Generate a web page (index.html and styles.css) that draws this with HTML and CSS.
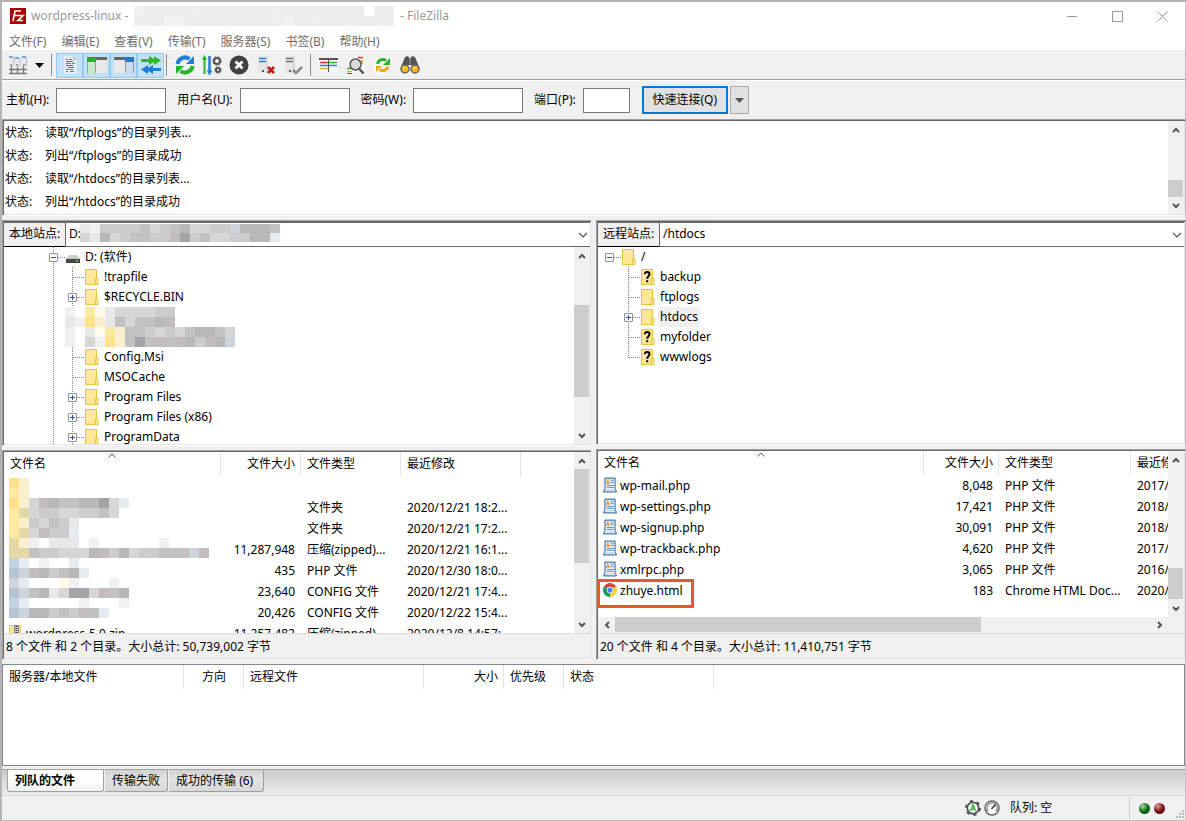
FILE: index.html
```html
<!DOCTYPE html>
<html lang="zh-CN">
<head>
    <meta charset="UTF-8">
    <title>wordpress-linux - FileZilla</title>
    <link rel="stylesheet" href="styles.css">
</head>
<body>
<svg class="sprite" aria-hidden="true">
    <symbol id="up" viewBox="0 0 8 6"><path d="M1 5 4 2 7 5" fill="none" stroke="#555" stroke-width="2"/></symbol>
    <symbol id="down" viewBox="0 0 8 6"><path d="M1 1 4 4 7 1" fill="none" stroke="#555" stroke-width="2"/></symbol>
    <symbol id="left" viewBox="0 0 6 8"><path d="M5 1 2 4 5 7" fill="none" stroke="#555" stroke-width="2"/></symbol>
    <symbol id="right" viewBox="0 0 6 8"><path d="M1 1 4 4 1 7" fill="none" stroke="#555" stroke-width="2"/></symbol>
    <symbol id="chevron" viewBox="0 0 10 6"><path d="M1 1 5 5 9 1" fill="none" stroke="#555" stroke-width="1.2"/></symbol>
    <symbol id="sort" viewBox="0 0 8 5"><path d="M.5 4.5 4 1 7.5 4.5" fill="none" stroke="#666"/></symbol>
    <symbol id="caret" viewBox="0 0 9 5"><path d="M0 0h9L4.500 5z" fill="currentColor"/></symbol>
    <symbol id="folder" viewBox="0 0 14 16">
        <path d="M.5.500h11v9h1.500v6H.5z" fill="#ffe797" stroke="#e8c341"/>
        <path d="M10.500 15V9.500H13" fill="none" stroke="#e8c341"/>
    </symbol>
    <symbol id="unknown" viewBox="0 0 14 16">
        <use href="#folder"/>
        <path d="M3.800 5.200C3.800 2.400 8.500 2.400 8.500 5.300 8.500 7.300 6.200 7.200 6.200 9.800" fill="none" stroke="#000" stroke-width="2"/>
        <path d="M5.200 11.200h2v2h-2z"/>
    </symbol>
    <symbol id="php" viewBox="0 0 15 16">
        <path d="M2 .5h11v11l1.500 4H.5l1.500-4z" fill="#9cc0de" stroke="#3a6ea5"/>
        <path d="M3 2h9v10.500H3z" fill="#f2f8fd"/>
        <path d="m3.500 7 1.700-4 1.700 4M4 5.800h2.400" fill="none" stroke="#f08a24" stroke-width="1.200"/>
        <path d="M8 3.500h3.500M8 5.500h3.500M4 8.500h7.500M4 10.500h7.500" stroke="#4a82b8"/>
        <path d="M2 13.500h11" stroke="#fff"/>
    </symbol>
    <symbol id="zip" viewBox="0 0 14 16">
        <use href="#folder"/>
        <path d="M5.500.5h4v12h-4z" fill="#d8d8d8" stroke="#888"/>
        <path d="M7.500 1v10" stroke="#333" stroke-width="2" stroke-dasharray="1 1"/>
    </symbol>
    <symbol id="chrome" viewBox="0 0 14 14">
        <path d="M7 7 .94 3.500A7 7 0 0 1 13.060 3.500z" fill="#db4437"/>
        <path d="M7 7 13.060 3.500A7 7 0 0 1 7 14z" fill="#ffcd40"/>
        <path d="M7 7 7 14A7 7 0 0 1 .94 3.500z" fill="#0f9d58"/>
        <path d="M7 3.800h6.200l-.2-.5H7z" fill="#db4437"/>
        <circle cx="7" cy="7" r="3.300" fill="#fff"/><circle cx="7" cy="7" r="2.600" fill="#4285f4"/>
    </symbol>
</svg>

<div class="window">
    <header class="title-bar">
        <svg class="app-icon" viewBox="0 0 16 16">
            <path d="M0 0h16v16H0z" fill="#b00000"/>
            <path d="M.5.500h15v15H.5z" fill="none" stroke="#8a0000" stroke-dasharray="1 1"/>
            <path d="M3 13 5 3h6M4.200 7.500h4.500M8 7.500h5L8 12.500h5" fill="none" stroke="#fff" stroke-width="1.700"/>
        </svg>
        <span class="title-name">wordpress-linux -</span>
        <svg class="mosaic" data-mosaic="title"></svg>
        <span class="title-app">- FileZilla</span>
        <div class="window-buttons">
            <button aria-label="最小化"><svg width="11" height="11"><path d="M0 5.500h10" stroke="#999"/></svg></button>
            <button aria-label="最大化"><svg width="11" height="11"><path d="M.5.500h10v10H.5z" fill="none" stroke="#999"/></svg></button>
            <button aria-label="关闭"><svg width="11" height="11"><path d="m.5.500 10 10m0-10-10 10" stroke="#999"/></svg></button>
        </div>
    </header>

    <nav class="menu-bar">
        <button>文件(F)</button>
        <button>编辑(E)</button>
        <button>查看(V)</button>
        <button>传输(T)</button>
        <button>服务器(S)</button>
        <button>书签(B)</button>
        <button>帮助(H)</button>
    </nav>

    <div class="toolbar">
        <button class="tool" aria-label="站点管理器">
            <svg viewBox="0 0 20 20">
                <path d="M1 1h5v10H1zM7 2h5v10H7zM13 1h5v10h-5z" fill="#e8eaec"/>
                <path d="M1 2h4M7 3h4M14 2h4" stroke="#4a9be0" stroke-width="1.500"/>
                <path d="M6 2v9M12 3v9M18.500 2v9" stroke="#bbb"/>
                <path d="M3.500 11v3M9.500 12v6M15.500 11v3M1 14.500h18M1 18.500h18M3.500 13v5M15.500 13v5" fill="none" stroke="#777" stroke-width="1.300"/>
                <path d="M2 10h2M8 10h2M15 10h2" stroke="#555"/>
            </svg>
        </button>
        <button class="tool-menu" aria-label="打开站点"><svg width="9" height="5"><use href="#caret"/></svg></button>
        <span class="tool-separator"></span>
        <button class="tool pressed" aria-label="消息日志">
            <svg viewBox="0 0 20 20">
                <path d="M4 1h9l4 4v14H4z" fill="#e6ebf0"/><path d="M13 1v4h4z" fill="#bcc4cc"/>
                <path d="M6 4.500h2M6 8.500h5M8 12.500h6M6 16.500h2M10 16.500h4" stroke="#4a80b4"/>
                <path d="M9 4.500h3M12 8.500h3M9 14.500h4" stroke="#37a837"/>
                <path d="M6 6.500h7M6 10.500h7M6 14.500h2" stroke="#5b6f82"/>
            </svg>
        </button>
        <button class="tool pressed" aria-label="本地目录树">
            <svg viewBox="0 0 20 20">
                <path d="M0 2h20v16H0z" fill="#e9e9e9"/><path d="M0 2h20v3H0z" fill="#666"/>
                <path d="M0 3h9v4H0z" fill="#25b825"/><path d="M0 7h8v11H0z" fill="#c8e8cc"/>
                <path d="M8.500 7v11M.5 7v11" stroke="#999"/>
            </svg>
        </button>
        <button class="tool pressed" aria-label="远程目录树">
            <svg viewBox="0 0 20 20">
                <path d="M0 2h20v16H0z" fill="#e9e9e9"/><path d="M0 2h20v3H0z" fill="#666"/>
                <path d="M11 3h9v4h-9z" fill="#1d7bd4"/><path d="M12 7h8v11h-8z" fill="#c4dcf2"/>
                <path d="M11.500 7v11M19.500 7v11" stroke="#999"/>
            </svg>
        </button>
        <button class="tool pressed" aria-label="传输队列">
            <svg viewBox="0 0 20 20">
                <path d="M0 4h8V1l5 3V1l7 4.500-7 4.500V7l-5 3V7H0z" fill="#29b929"/>
                <path d="M20 13h-8v-3l-5 3v-3l-7 4.500 7 4.500v-3l5 3v-3h8z" fill="#1f7fd6"/>
            </svg>
        </button>
        <span class="tool-separator after-pressed"></span>
        <button class="tool" aria-label="刷新">
            <svg viewBox="0 0 20 20">
                <path d="M2.500 9a7.500 7.500 0 0 1 12-5" fill="none" stroke="#1f7fd6" stroke-width="4"/>
                <path d="M19 1v8h-8z" fill="#1f7fd6"/>
                <path d="M17.500 11a7.500 7.500 0 0 1-12 5" fill="none" stroke="#27b427" stroke-width="4"/>
                <path d="M1 19v-8h8z" fill="#27b427"/>
            </svg>
        </button>
        <button class="tool" aria-label="处理队列">
            <svg viewBox="0 0 20 20">
                <path d="M2.500 19V4M1 5l1.500-3L4 5" fill="#27b427" stroke="#27b427" stroke-width="2"/>
                <path d="M7.500 1v15M6 15l1.500 3L9 15" fill="#1f7fd6" stroke="#1f7fd6" stroke-width="2.500"/>
                <circle cx="15" cy="6" r="3" fill="none" stroke="#555" stroke-width="2"/>
                <circle cx="15" cy="6" r="4.300" fill="none" stroke="#555" stroke-dasharray="1.700 1.700"/>
                <circle cx="16" cy="15" r="2" fill="none" stroke="#555" stroke-width="2"/>
                <circle cx="16" cy="15" r="3.300" fill="none" stroke="#555" stroke-dasharray="1.300 1.300"/>
            </svg>
        </button>
        <button class="tool" aria-label="取消">
            <svg viewBox="0 0 20 20">
                <circle cx="10" cy="10" r="9.500" fill="#414141"/>
                <path d="m6.500 6.500 7 7m0-7-7 7" stroke="#fff" stroke-width="2.800"/>
            </svg>
        </button>
        <button class="tool" aria-label="断开连接">
            <svg viewBox="0 0 20 20">
                <path d="M2 1h9v17H2z" fill="#e6e6e6"/><path d="M11 1v17" stroke="#c4c4c4"/>
                <path d="M3 3.500h7M3 6.500h7" stroke="#2b83d6" stroke-width="1.500"/><path d="M6 15h2v2H6z" fill="#555"/>
                <path d="m12 12 6 6m0-6-6 6" stroke="#c01616" stroke-width="2.500"/>
            </svg>
        </button>
        <button class="tool" aria-label="重新连接">
            <svg viewBox="0 0 20 20">
                <path d="M2 1h9v17H2z" fill="#e6e6e6"/><path d="M11 1v17" stroke="#c4c4c4"/>
                <path d="M3 3.500h7M3 6.500h7" stroke="#777" stroke-width="1.500"/><path d="M6 15h2v2H6z" fill="#555"/>
                <path d="m10 15 3 3 6-6" fill="none" stroke="#888" stroke-width="2.500"/>
            </svg>
        </button>
        <span class="tool-separator"></span>
        <button class="tool" aria-label="目录比较">
            <svg viewBox="0 0 20 20">
                <path d="M1 3h18v14H1z" fill="#fafafa"/><path d="M0 3h19v2H0z" fill="#555"/>
                <path d="M1 7.500h8" stroke="#d33" stroke-width="1.500"/><path d="M1 10.500h17" stroke="#2b83d6" stroke-width="1.500"/>
                <path d="M1 13.500h8" stroke="#e8b21a" stroke-width="1.500"/><path d="M10 7.500h8" stroke="#27b427" stroke-width="1.500"/>
                <path d="M9.500 3v14" stroke="#555"/>
            </svg>
        </button>
        <button class="tool" aria-label="文件名过滤">
            <svg viewBox="0 0 20 20">
                <path d="M9 1h9v13H9zM1 7h8v12H1z" fill="#fafafa"/>
                <path d="M12 2.500h5" stroke="#d33" stroke-width="1.500"/><path d="M1 13.500h4" stroke="#27b427" stroke-width="1.500"/>
                <path d="M1 16.500h5" stroke="#e8b21a" stroke-width="1.500"/><path d="M1 18.500h5" stroke="#d33"/>
                <path d="M16 5v4" stroke="#e8b21a" stroke-width="2"/>
                <circle cx="9.500" cy="9.500" r="5.500" fill="#d9d9d9" stroke="#555" stroke-width="1.500"/>
                <path d="m13.500 14 4 4.500" stroke="#555" stroke-width="2.500"/>
            </svg>
        </button>
        <button class="tool" aria-label="同步浏览">
            <svg viewBox="0 0 20 20">
                <path d="M9 1h10v13H9zM1 7h10v12H1z" fill="#fafafa"/>
                <path d="M4.500 9a5.500 5.500 0 0 1 8.500-3.500" fill="none" stroke="#27b427" stroke-width="3"/><path d="M17 3v7h-7z" fill="#27b427"/>
                <path d="M15 11.500a5.500 5.500 0 0 1-8.500 3" fill="none" stroke="#f0a818" stroke-width="3"/><path d="M3 17v-6h6z" fill="#f0a818"/>
            </svg>
        </button>
        <button class="tool" aria-label="搜索文件">
            <svg viewBox="0 0 20 20">
                <path d="m5 2 3-1 2 3 2-3 3 1 4.500 11-5 4-3-7h-3l-3 7-5-4z" fill="#555"/>
                <path d="M10 4v5" stroke="#999"/>
                <circle cx="5" cy="14" r="4" fill="#f8b414" stroke="#666" stroke-width="1.500"/>
                <circle cx="15" cy="14" r="4" fill="#f8b414" stroke="#666" stroke-width="1.500"/>
                <path d="M3.500 13h2M13.500 13h2" stroke="#ffe28a" stroke-width="1.500"/>
            </svg>
        </button>
    </div>

    <form class="quick-connect">
        <label for="host">主机(H):</label>
        <input id="host" type="text">
        <label for="user">用户名(U):</label>
        <input id="user" type="text">
        <label for="pass">密码(W):</label>
        <input id="pass" type="password">
        <label for="port">端口(P):</label>
        <input id="port" class="port" type="text">
        <button type="button" class="connect">快速连接(Q)</button>
        <button type="button" class="history" aria-label="历史记录"><svg width="9" height="5"><use href="#caret"/></svg></button>
    </form>

    <section class="pane log">
        <ul class="log-lines">
            <li><span class="log-kind">状态:</span>读取“/ftplogs”的目录列表...</li>
            <li><span class="log-kind">状态:</span>列出“/ftplogs”的目录成功</li>
            <li><span class="log-kind">状态:</span>读取“/htdocs”的目录列表...</li>
            <li><span class="log-kind">状态:</span>列出“/htdocs”的目录成功</li>
        </ul>
        <div class="scrollbar log-scroll">
            <svg class="up"><use href="#up"/></svg><span class="thumb"></span><svg class="down"><use href="#down"/></svg>
        </div>
    </section>

    <main class="sites">
        <div class="site">
            <section class="pane site-tree">
                <div class="address">
                    <label for="local-path">本地站点:</label>
                    <div class="path">
                        <select id="local-path"><option>D:</option></select>
                        <svg class="mosaic path-mosaic" data-mosaic="path"></svg>
                        <svg class="path-chevron"><use href="#chevron"/></svg>
                    </div>
                </div>
                <div class="scroll-area">
                    <ul class="tree local-tree">
                        <li><i class="node line"><b class="box minus"></b></i>
                            <svg class="item-icon" viewBox="0 0 14 16"><path d="m3 6h8l3 4H0z" fill="#c9cccf"/><path d="M0 10h14v4H0z" fill="#444"/><path d="M10 12h2" stroke="#5ee05e" stroke-width="1.500"/></svg>
                            <span>D: (软件)</span></li>
                        <li><i class="guide line"></i><i class="node line"></i><svg class="item-icon"><use href="#folder"/></svg><span>!trapfile</span></li>
                        <li><i class="guide line"></i><i class="node line"><b class="box plus"></b></i><svg class="item-icon"><use href="#folder"/></svg><span>$RECYCLE.BIN</span></li>
                        <li class="masked"><i class="guide line"></i><svg class="mosaic" data-mosaic="tree"></svg></li>
                        <li><i class="guide line"></i><i class="node line"></i><svg class="item-icon"><use href="#folder"/></svg><span>Config.Msi</span></li>
                        <li><i class="guide line"></i><i class="node line"></i><svg class="item-icon"><use href="#folder"/></svg><span>MSOCache</span></li>
                        <li><i class="guide line"></i><i class="node line"><b class="box plus"></b></i><svg class="item-icon"><use href="#folder"/></svg><span>Program Files</span></li>
                        <li><i class="guide line"></i><i class="node line"><b class="box plus"></b></i><svg class="item-icon"><use href="#folder"/></svg><span>Program Files (x86)</span></li>
                        <li><i class="guide line"></i><i class="node line"><b class="box plus"></b></i><svg class="item-icon"><use href="#folder"/></svg><span>ProgramData</span></li>
                    </ul>
                    <div class="scrollbar tree-scroll">
                        <svg class="up"><use href="#up"/></svg><span class="thumb"></span><svg class="down"><use href="#down"/></svg>
                    </div>
                </div>
            </section>

            <section class="pane file-list local-list">
                <div class="scroll-area">
                    <div class="table-view">
                        <table>
                            <colgroup><col class="col-name"><col class="col-size"><col class="col-type"><col class="col-date"><col></colgroup>
                            <thead>
                                <tr><th>文件名</th><th class="number">文件大小</th><th>文件类型</th><th>最近修改</th><th class="rest"></th></tr>
                            </thead>
                            <tbody>
                                <tr><td></td><td></td><td></td><td></td></tr>
                                <tr><td></td><td></td><td>文件夹</td><td>2020/12/21 18:2...</td></tr>
                                <tr><td></td><td></td><td>文件夹</td><td>2020/12/21 17:2...</td></tr>
                                <tr><td></td><td class="number">11,287,948</td><td>压缩(zipped)...</td><td>2020/12/21 16:1...</td></tr>
                                <tr><td></td><td class="number">435</td><td>PHP 文件</td><td>2020/12/30 18:0...</td></tr>
                                <tr><td></td><td class="number">23,640</td><td>CONFIG 文件</td><td>2020/12/21 17:4...</td></tr>
                                <tr><td></td><td class="number">20,426</td><td>CONFIG 文件</td><td>2020/12/22 15:4...</td></tr>
                                <tr><td class="name"><svg class="item-icon"><use href="#zip"/></svg>wordpress-5.9.zip</td><td class="number">11,257,482</td><td>压缩(zipped)...</td><td>2020/12/8 14:57:...</td></tr>
                            </tbody>
                        </table>
                        <svg class="sort"><use href="#sort"/></svg>
                        <svg class="mosaic list-mosaic" data-mosaic="list"></svg>
                    </div>
                    <div class="scrollbar local-scroll">
                        <svg class="up"><use href="#up"/></svg><span class="thumb"></span><svg class="down"><use href="#down"/></svg>
                    </div>
                </div>
                <p class="summary">8 个文件 和 2 个目录。大小总计: 50,739,002 字节</p>
            </section>
        </div>

        <div class="site">
            <section class="pane site-tree">
                <div class="address">
                    <label for="remote-path">远程站点:</label>
                    <div class="path">
                        <select id="remote-path"><option>/htdocs</option></select>
                        <svg class="path-chevron"><use href="#chevron"/></svg>
                    </div>
                </div>
                <div class="scroll-area">
                    <ul class="tree remote-tree">
                        <li><i class="node"><b class="box minus"></b></i><svg class="item-icon"><use href="#folder"/></svg><span>/</span></li>
                        <li><i class="guide"></i><i class="node line"></i><svg class="item-icon"><use href="#unknown"/></svg><span>backup</span></li>
                        <li><i class="guide"></i><i class="node line"></i><svg class="item-icon"><use href="#folder"/></svg><span>ftplogs</span></li>
                        <li><i class="guide"></i><i class="node line"><b class="box plus"></b></i><svg class="item-icon"><use href="#folder"/></svg><span class="selected">htdocs</span></li>
                        <li><i class="guide"></i><i class="node line"></i><svg class="item-icon"><use href="#unknown"/></svg><span>myfolder</span></li>
                        <li><i class="guide"></i><i class="node line last"></i><svg class="item-icon"><use href="#unknown"/></svg><span>wwwlogs</span></li>
                    </ul>
                </div>
            </section>

            <section class="pane file-list remote-list">
                <div class="scroll-area">
                    <div class="table-view">
                        <table>
                            <colgroup><col class="col-name"><col class="col-size"><col class="col-type"><col class="col-date"></colgroup>
                            <thead>
                                <tr><th>文件名</th><th class="number">文件大小</th><th>文件类型</th><th>最近修改</th></tr>
                            </thead>
                            <tbody>
                                <tr><td class="name"><svg class="item-icon"><use href="#php"/></svg>wp-mail.php</td><td class="number">8,048</td><td>PHP 文件</td><td>2017/</td></tr>
                                <tr><td class="name"><svg class="item-icon"><use href="#php"/></svg>wp-settings.php</td><td class="number">17,421</td><td>PHP 文件</td><td>2018/</td></tr>
                                <tr><td class="name"><svg class="item-icon"><use href="#php"/></svg>wp-signup.php</td><td class="number">30,091</td><td>PHP 文件</td><td>2018/</td></tr>
                                <tr><td class="name"><svg class="item-icon"><use href="#php"/></svg>wp-trackback.php</td><td class="number">4,620</td><td>PHP 文件</td><td>2017/</td></tr>
                                <tr><td class="name"><svg class="item-icon"><use href="#php"/></svg>xmlrpc.php</td><td class="number">3,065</td><td>PHP 文件</td><td>2016/</td></tr>
                                <tr><td class="name"><svg class="item-icon"><use href="#chrome"/></svg>zhuye.html</td><td class="number">183</td><td>Chrome HTML Doc...</td><td>2020/</td></tr>
                            </tbody>
                        </table>
                        <svg class="sort"><use href="#sort"/></svg>
                    </div>
                    <div class="scrollbar remote-scroll">
                        <svg class="up"><use href="#up"/></svg><span class="thumb"></span><svg class="down"><use href="#down"/></svg>
                    </div>
                </div>
                <div class="scrollbar-h">
                    <svg class="back"><use href="#left"/></svg><span class="thumb"></span><svg class="forward"><use href="#right"/></svg>
                </div>
                <p class="summary">20 个文件 和 4 个目录。大小总计: 11,410,751 字节</p>
                <span class="callout"></span>
            </section>
        </div>
    </main>

    <section class="queue">
        <table>
            <colgroup><col class="q-local"><col class="q-direction"><col class="q-remote"><col class="q-size"><col class="q-priority"><col class="q-status"><col></colgroup>
            <thead>
                <tr><th>服务器/本地文件</th><th class="center">方向</th><th>远程文件</th><th class="number">大小</th><th>优先级</th><th>状态</th><th class="rest"></th></tr>
            </thead>
        </table>
    </section>

    <div class="tabs" role="tablist">
        <button class="tab active" role="tab" aria-selected="true">列队的文件</button>
        <button class="tab" role="tab">传输失败</button>
        <button class="tab" role="tab">成功的传输 (6)</button>
    </div>

    <footer class="status-bar">
        <svg class="status-icon" viewBox="0 0 16 16">
            <circle cx="8" cy="8" r="5.700" fill="#fff" stroke="#555" stroke-width="1.800"/>
            <circle cx="8" cy="8" r="7" fill="none" stroke="#555" stroke-width="2" stroke-dasharray="3.300 4.030"/>
            <path d="M5.500 11 8 5l2.500 6M6.500 9h3" fill="none" stroke="#2eb82e" stroke-width="1.500"/>
        </svg>
        <svg class="status-icon" viewBox="0 0 16 16">
            <circle cx="8" cy="8" r="7" fill="#fff" stroke="#666" stroke-width="1.500"/>
            <path d="M4 11a5 5 0 1 1 8 0" fill="none" stroke="#888" stroke-width="1.500"/>
            <path d="m7.500 9 4-4.500" stroke="#444" stroke-width="1.800"/>
        </svg>
        <span class="queue-size">队列: 空</span>
        <div class="lights"><span class="light green"></span><span class="light red"></span></div>
        <svg class="grip" viewBox="0 0 10 10"><path d="M7 0h2v2H7zM4 3h2v2H4zM7 3h2v2H7zM1 6h2v2H1zM4 6h2v2H4zM7 6h2v2H7z" fill="#bbb"/></svg>
    </footer>
</div>
<script src="script.js"></script>
</body>
</html>
```
FILE: styles.css
```css
* {
    margin: 0;
    padding: 0;
    box-sizing: border-box;
}

body {
    font-family: "Noto Sans", "Noto Sans CJK SC", sans-serif;
    font-size: 12px;
    line-height: 20px;
    color: #000;
}

button, input, select {
    font: inherit;
    color: inherit;
    border: none;
    background: none;
}

ul {
    list-style: none;
}

svg {
    display: block;
    flex: none;
}

.sprite {
    position: absolute;
    width: 0;
    height: 0;
}

.window {
    display: flex;
    flex-direction: column;
    min-height: 100vh;
    border-style: solid;
    border-width: 2px 1px 1px 2px;
    border-color: #b0b0b0 #c0c0c0 #c0c0c0 #b4b4b4;
    background-color: #f0f0f0;
}

/* title and menu */
.title-bar {
    display: flex;
    align-items: center;
    height: 28px;
    padding-left: 8px;
    background-color: white;
    color: #999;
}

.app-icon {
    width: 16px;
    height: 16px;
    margin-right: 5px;
}

.title-name {
    min-width: 103px;
}

.title-app {
    margin-left: 6px;
}

.window-buttons {
    display: flex;
    margin-left: auto;
}

.window-buttons button {
    display: flex;
    align-items: center;
    justify-content: center;
    width: 45px;
    height: 28px;
}

.menu-bar {
    display: flex;
    gap: 15px;
    height: 20px;
    padding-left: 7px;
    background-color: white;
    color: #6d6d6d;
}

.menu-bar button {
    line-height: 24px;
    white-space: nowrap;
}

/* toolbar */
.toolbar {
    display: flex;
    align-items: center;
    height: 31px;
    padding-left: 2px;
    border-bottom: 1px solid white;
    box-shadow: inset 0 -1px #a0a0a0;
}

.tool {
    display: flex;
    align-items: center;
    justify-content: center;
    width: 27px;
    height: 25px;
}

.tool svg {
    width: 20px;
    height: 20px;
}

.tool.pressed {
    border: 1px solid #90c8f6;
    background-color: #c4e0f7;
}

.tool-menu {
    display: flex;
    justify-content: center;
    width: 16px;
}

.tool-separator {
    width: 1px;
    height: 22px;
    margin: 0 4px;
    background-color: #8c8c8c;
}

.tool-separator.after-pressed {
    margin-left: 2px;
}

/* quick connect bar */
.quick-connect {
    display: flex;
    align-items: center;
    height: 38px;
    padding-left: 4px;
}

.quick-connect label {
    margin-right: 7px;
    white-space: nowrap;
}

.quick-connect input {
    width: 110px;
    height: 25px;
    margin-right: 11px;
    padding: 0 4px;
    border: 1px solid #7a7a7a;
    background-color: white;
}

.quick-connect .port {
    width: 47px;
    margin-right: 12px;
}

.connect {
    width: 86px;
    height: 28px;
    margin-right: 2px;
    border: 2px solid #0078d7;
    background-color: #e1e1e1;
    white-space: nowrap;
}

.history {
    display: flex;
    align-items: center;
    justify-content: center;
    width: 19px;
    height: 28px;
    border: 1px solid #adadad;
    background-color: #e1e1e1;
    color: #555;
}

/* sunken panes */
.pane {
    position: relative;
    padding: 1px;
    border-style: solid;
    border-width: 1px 0 1px 1px;
    border-color: #a0a0a0 white white #a0a0a0;
    background-color: white;
    box-shadow: inset 1px 1px #696969, inset -1px -1px #e3e3e3;
}

.log {
    display: flex;
    height: 97px;
}

.log-lines {
    flex: 1;
    overflow: hidden;
}

.log-lines li {
    height: 23px;
    padding-left: 1px;
    line-height: 24px;
    white-space: nowrap;
}

.log-kind {
    display: inline-block;
    width: 40px;
}

.sites {
    flex: 1;
    display: grid;
    grid-template-columns: 1fr 1fr;
    gap: 5px;
    margin-top: 4px;
}

.site {
    display: flex;
    flex-direction: column;
    gap: 4px;
    min-width: 0;
}

.site-tree {
    display: flex;
    flex-direction: column;
    flex: 1;
    min-height: 120px;
}

.address {
    display: flex;
    height: 25px;
    border-top: 1px solid #696969;
    border-bottom: 1px solid #696969;
}

.address label {
    width: 61px;
    padding-left: 5px;
    border-bottom: 1px solid black;
    background-color: #f0f0f0;
    line-height: 22px;
    margin-bottom: -1px;
    white-space: nowrap;
}

.path {
    position: relative;
    flex: 1;
    border-left: 1px solid #696969;
}

.path select {
    display: block;
    width: 100%;
    height: 22px;
    padding-left: 3px;
    appearance: none;
}

.path-mosaic {
    position: absolute;
    top: 1px;
    left: 14px;
}

.path-chevron {
    position: absolute;
    top: 9px;
    right: 2px;
    width: 10px;
    height: 6px;
}

.scroll-area {
    display: flex;
    flex: 1;
    min-height: 0;
}

/* directory trees */
.tree {
    flex: 1;
    contain: size;
    overflow: hidden;
}

.local-tree {
    padding-left: 40px;
}

.remote-tree {
    padding-left: 2px;
}

.tree li {
    display: flex;
    align-items: center;
    height: 20px;
}

.tree .masked {
    height: 40px;
}

.guide, .node {
    flex: none;
    display: flex;
    align-items: center;
    align-self: stretch;
}

.guide {
    width: 19px;
}

.node {
    width: 22px;
    padding-left: 5px;
    background: repeating-linear-gradient(to right, #808080 0 1px, transparent 1px 2px) 10px 10px / 12px 1px no-repeat;
}

.guide.line {
    background: repeating-linear-gradient(#808080 0 1px, transparent 1px 2px) 9px 0 / 1px 100% no-repeat;
}

.node.line {
    background:
        repeating-linear-gradient(to right, #808080 0 1px, transparent 1px 2px) 10px 10px / 12px 1px no-repeat,
        repeating-linear-gradient(#808080 0 1px, transparent 1px 2px) 9px 0 / 1px 100% no-repeat;
}

.node.last {
    background-size: 12px 1px, 1px 11px;
}

.box {
    width: 9px;
    height: 9px;
    border: 1px solid #919191;
    border-radius: 1px;
    background: linear-gradient(#34509c, #34509c) 1px 3px / 5px 1px no-repeat white;
}

.box.plus {
    background:
        linear-gradient(#34509c, #34509c) 1px 3px / 5px 1px no-repeat,
        linear-gradient(#34509c, #34509c) 3px 1px / 1px 5px no-repeat white;
}

.item-icon {
    width: 14px;
    height: 16px;
    margin-right: 3px;
}

.tree span {
    padding: 0 2px;
    white-space: nowrap;
}

.tree .selected {
    background-color: #f0f0f0;
}

.masked .mosaic {
    margin-left: 2px;
}

/* tables */
table {
    width: 100%;
    table-layout: fixed;
    border-spacing: 0;
}

th, td {
    overflow: hidden;
    padding: 0 5px 0 6px;
    font-weight: normal;
    text-align: left;
    white-space: nowrap;
}

th {
    height: 24px;
    border-right: 1px solid #e5e5e5;
    line-height: 24px;
}

td {
    height: 21px;
    line-height: 21px;
}

th.rest {
    border-right: none;
}

.number {
    text-align: right;
}

td.number {
    padding-right: 6px;
}

.center {
    text-align: center;
}

.name {
    padding-left: 5px;
}

.name .item-icon {
    float: left;
    margin: 2px 3px 0 0;
}

.table-view {
    position: relative;
    flex: 1;
    min-width: 0;
    overflow: hidden;
}

.file-list {
    display: flex;
    flex-direction: column;
}

.local-list {
    height: 210px;
}

.remote-list {
    height: 211px;
}

.local-list .col-name { width: 217px; }
.local-list .col-size { width: 80px; }
.local-list .col-type { width: 100px; }
.local-list .col-date { width: 120px; }

.remote-list table { width: 653px; }
.remote-list .col-size { width: 75px; }
.remote-list .col-type { width: 132px; }
.remote-list .col-date { width: 120px; }

.sort {
    position: absolute;
    top: 1px;
    left: 104px;
    width: 8px;
    height: 5px;
}

.remote-list .sort {
    left: 159px;
}

.list-mosaic {
    position: absolute;
    top: 26px;
    left: 5px;
}

.summary {
    height: 25px;
    padding-left: 2px;
    border-top: 1px solid #d9d9d9;
    background-color: #f0f0f0;
    line-height: 25px;
    white-space: nowrap;
}

.callout {
    position: absolute;
    top: 129px;
    left: 0;
    width: 97px;
    height: 29px;
    border: 3px solid #f4512c;
}

/* scrollbars */
.scrollbar {
    flex: none;
    display: grid;
    justify-items: center;
    align-items: center;
    width: 16px;
    background-color: #f0f0f0;
}

.scrollbar .up, .scrollbar .down {
    grid-row: 1;
    width: 8px;
    height: 6px;
}

.scrollbar .down {
    grid-row: 5;
}

.scrollbar .thumb {
    grid-row: 3;
    align-self: stretch;
    justify-self: start;
    width: 15px;
}

.thumb {
    background-color: #cdcdcd;
}

.log-scroll { grid-template-rows: 17px 42fr 17fr 0fr 17px; }
.tree-scroll { grid-template-rows: 17px 41fr 92fr 30fr 17px; }
.local-scroll { grid-template-rows: 17px 0fr 94fr 53fr 17px; }
.remote-scroll { grid-template-rows: 17px 100fr 31fr 1fr 17px; }

.scrollbar-h {
    display: grid;
    grid-template-columns: 17px 366fr 170fr 17px 16px;
    align-items: center;
    justify-items: center;
    height: 16px;
    background-color: #f0f0f0;
}

.scrollbar-h .thumb {
    align-self: start;
    justify-self: stretch;
    height: 15px;
}

.scrollbar-h svg {
    width: 6px;
    height: 8px;
}

.scrollbar-h .forward {
    grid-column: 4;
}

/* transfer queue */
.queue {
    height: 102px;
    margin-top: 4px;
    border: 1px solid #828790;
    background-color: white;
}

.q-local { width: 181px; }
.q-direction { width: 60px; }
.q-remote { width: 180px; }
.q-size { width: 80px; }
.q-priority { width: 60px; }
.q-status { width: 150px; }

.tabs {
    display: flex;
    align-items: flex-start;
    height: 27px;
    margin-top: 3px;
    padding-left: 5px;
    border-top: 1px solid #a0a0a0;
    border-bottom: 1px solid #d9d9d9;
    background: linear-gradient(#cbcbcb, #ececec);
}

.tab {
    height: 22px;
    padding: 0 7px;
    border: 1px solid #a0a0a0;
    border-top: none;
    border-left-color: #f4f4f4;
    border-radius: 0 0 3px 3px;
    background: linear-gradient(#d2d2d2, #e2e2e2 50%, #d8d8d8);
    line-height: 18px;
    white-space: nowrap;
}

.tab:last-child {
    padding-right: 10px;
}

.tab.active {
    padding-right: 28px;
    border-left-color: #a0a0a0;
    background: linear-gradient(white 50%, #f0f0f0);
    font-weight: bold;
}

.status-bar {
    display: flex;
    align-items: center;
    height: 24px;
}

.status-icon {
    width: 16px;
    height: 16px;
    margin-right: 3px;
}

.status-icon:first-child {
    margin-left: auto;
}

.queue-size {
    width: 126px;
    padding-left: 7px;
}

.lights {
    display: flex;
    align-items: center;
    gap: 4px;
    width: 46px;
    height: 22px;
    padding-left: 9px;
    border-left: 1px solid #d0d0d0;
}

.light {
    width: 11px;
    height: 11px;
    border-radius: 50%;
}

.green {
    background: radial-gradient(circle at 35% 30%, #a8d8a8, #0c6c14 50%, #043c08);
}

.red {
    background: radial-gradient(circle at 35% 30%, #d8a0a0, #7a1010 50%, #480404);
}

.grip {
    align-self: flex-end;
    width: 10px;
    height: 10px;
}
```
FILE: script.js
```js
// One letter per mosaic cell, "." is an empty cell
const palette = {
    a: '#f0f0f0', b: '#e8e8e8', c: '#d6d6d6', d: '#cccccc', e: '#c2c2c2', f: '#b8b8b8', g: '#a4a4a8',
    m: '#c4bcbc', s: '#e6ebf2', v: '#cdd4de', t: '#b6c4d4', u: '#c2d4e2',
    y: '#fde9a4', Y: '#fee28a', z: '#faf0d0', w: '#fffbea', k: '#e4d9a4',
    p: '#ececec', q: '#eeeeee', r: '#f1f1f1'
};

const mosaics = {
    title: {
        size: [10, 10],
        rows: ['rqqpppqppqppppqppppqqqp.qq', 'qqprrqpppqppppqrppqppqqpqq']
    },
    path: {
        size: [10, 9],
        rows: ['baddddecdefccddvfffe', 'cbfcdeeddmgdeccddffs']
    },
    tree: {
        size: [10, 10],
        rows: ['a.ywbccccdd', 'baYzbeceefm', 'a.bwyzeedcdceffec', 'a.caYzegememfdmfv']
    },
    list: {
        size: [10, 10],
        rows: [
            'Yz',
            'yz',
            'Yzcmfeeffgcs',
            'ykcddccddec',
            'yzdcedb',
            'ykcmdds',
            'kza.bbb.a......a',
            'kkeddcccfmdfcddeeevm',
            'us.a..s',
            'tvmfdefs',
            'vs...wa...a',
            'tvefbcggcmef',
            'us.....a...a',
            'tvffdedmes'
        ]
    }
};

document.querySelectorAll('[data-mosaic]').forEach((svg) => {
    const { size: [w, h], rows } = mosaics[svg.dataset.mosaic];
    const columns = Math.max(...rows.map((row) => row.length));
    svg.setAttribute('width', columns * w);
    svg.setAttribute('height', rows.length * h);
    rows.forEach((row, y) => {
        [...row].forEach((cell, x) => {
            if (cell === '.') return;
            const rect = document.createElementNS('http://www.w3.org/2000/svg', 'rect');
            rect.setAttribute('x', x * w);
            rect.setAttribute('y', y * h);
            rect.setAttribute('width', w);
            rect.setAttribute('height', h);
            rect.setAttribute('fill', palette[cell]);
            svg.appendChild(rect);
        });
    });
});
```
